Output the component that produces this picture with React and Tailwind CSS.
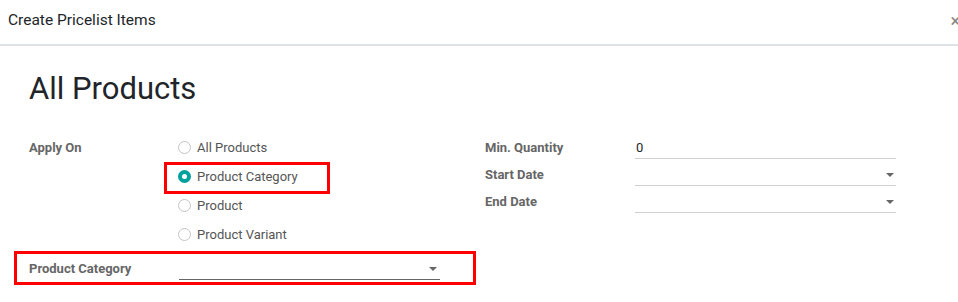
import React from 'react';

const font = { fontFamily: 'Roboto, "Liberation Sans", sans-serif' };

function Radio({ checked }) {
  if (checked) {
    return (
      <span className="w-[13px] h-[13px] rounded-full bg-[#00a09d] flex items-center justify-center shrink-0">
        <span className="w-[5px] h-[5px] rounded-full bg-white" />
      </span>
    );
  }
  return <span className="w-[13px] h-[13px] rounded-full border border-[#c4c4c4] bg-white shrink-0" />;
}

function Caret() {
  return <span className="w-0 h-0 border-l-[4px] border-r-[4px] border-t-[4px] border-l-transparent border-r-transparent border-t-[#666]" />;
}

function Field({ label, value, caret }) {
  return (
    <div className="flex h-[27px] items-start">
      <div className="w-[150px] pt-[7px] text-[13px] font-bold text-[#666] leading-[16px]">{label}</div>
      <div className="w-[261px] h-[26px] border-b border-[#d0d0d0] flex items-center justify-between pt-[5px] pl-[1px] pr-[2px]">
        <span className="text-[13px] text-[#212529]">{value}</span>
        {caret && <Caret />}
      </div>
    </div>
  );
}

export default function App() {
  const options = [
    { label: 'All Products' },
    { label: 'Product Category', checked: true, boxed: true },
    { label: 'Product' },
    { label: 'Product Variant' },
  ];
  return (
    <div className="w-[958px] h-[302px] bg-white overflow-hidden" style={font}>
      <div className="h-[46px] border-b-2 border-[#dee2e6] flex items-center justify-between pl-[8px] pb-[2px]">
        <span className="text-[15.5px] text-[#212529]">Create Pricelist Items</span>
        <span className="text-[18px] text-[#888] mr-[-2px] leading-none">×</span>
      </div>
      <div className="px-[29px]">
        <h1 className="text-[31px] leading-[40px] mt-[23px] text-[#212529] font-normal">All Products</h1>
        <div className="flex mt-[24px]">
          <div className="w-[456px] flex">
            <div className="w-[149px] pt-[7px] text-[13px] font-bold text-[#666] leading-[16px]">Apply On</div>
            <div className="flex flex-col">
              {options.map((o) => (
                <div key={o.label} className="relative h-[29px] flex items-center gap-[6px] text-[13px] text-[#555]">
                  <Radio checked={o.checked} />
                  <span>{o.label}</span>
                  {o.boxed && (
                    <span className="absolute left-[-14px] top-[0px] w-[166px] h-[32px] border-[3px] border-[#ff0000]" />
                  )}
                </div>
              ))}
            </div>
          </div>
          <div className="flex flex-col">
            <Field label="Min. Quantity" value="0" />
            <Field label="Start Date" caret />
            <Field label="End Date" caret />
          </div>
        </div>
        <div className="relative flex items-start h-[28px] mt-[5px]">
          <div className="w-[150px] pt-[7px] text-[13px] font-bold text-[#666] leading-[16px]">Product Category</div>
          <div className="w-[261px] h-[26px] border-b border-[#666] flex items-center justify-end pt-[4px] pr-[3px]">
            <Caret />
          </div>
          <span className="absolute left-[-15px] top-[-3px] w-[462px] h-[34px] border-[3px] border-[#ff0000]" />
        </div>
      </div>
    </div>
  );
}
